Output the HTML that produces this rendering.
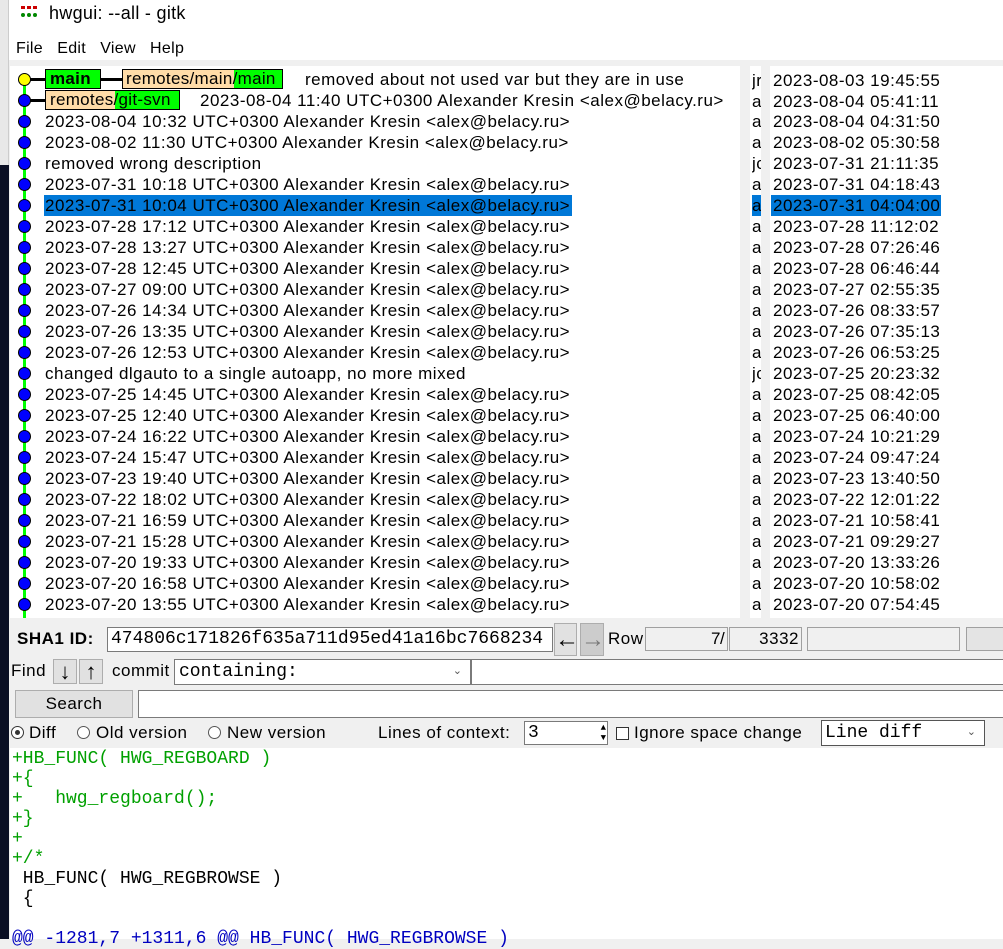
<!DOCTYPE html>
<html><head><meta charset="utf-8"><style>
*{margin:0;padding:0;box-sizing:border-box}
body{width:1003px;height:939px;overflow:hidden;background:#f0f0f0;font-family:"Liberation Sans",sans-serif;font-size:17px;letter-spacing:0.5px;color:#000;position:relative}
.a{position:absolute;white-space:nowrap}
.r{position:absolute;height:21px;line-height:21px;white-space:nowrap}
.dot{position:absolute;width:13px;height:13px;border-radius:50%;background:#0000ff;border:1px solid #000;left:18px}
.mono{font-family:"Liberation Mono",monospace;letter-spacing:0}
.field{position:absolute;background:#fff;border:1px solid #7a7a7a}
.sunk{position:absolute;background:#f0f0f0;border:1px solid #a0a0a0}
.btn{position:absolute;background:#e1e1e1;border:1px solid #adadad;text-align:center;letter-spacing:0}
.g{color:#00a000}
</style></head><body>
<div class="a" style="left:0;top:0;width:1003px;height:60px;background:#fff"></div>
<div class="a" style="left:0;top:0;width:9px;height:165px;background:#e8e8e8;border-right:1px solid #ccc"></div>
<div class="a" style="left:0;top:165px;width:9px;height:774px;background:#0a0f24"></div>
<div class="a" style="left:21px;top:6px;width:4px;height:3px;background:#c00"></div>
<div class="a" style="left:27px;top:6px;width:4px;height:3px;background:#c00"></div>
<div class="a" style="left:33px;top:6px;width:4px;height:3px;background:#c00"></div>
<div class="a" style="left:21px;top:13px;width:4px;height:4px;background:#080;border-radius:50%"></div>
<div class="a" style="left:27px;top:13px;width:4px;height:4px;background:#080;border-radius:50%"></div>
<div class="a" style="left:33px;top:13px;width:4px;height:4px;background:#080;border-radius:50%"></div>
<div class="a" style="left:49px;top:2px;font-size:18px;line-height:22px;letter-spacing:0.3px">hwgui: --all - gitk</div>
<div class="a" style="left:16px;top:39px;font-size:16px;letter-spacing:0.3px;line-height:20px">File&nbsp;&nbsp; Edit&nbsp;&nbsp; View&nbsp;&nbsp; Help</div>

<div class="a" style="left:10px;top:66px;width:730px;height:552px;background:#fff"></div>
<div class="a" style="left:750px;top:66px;width:11px;height:552px;background:#fff;overflow:hidden"></div>
<div class="a" style="left:770px;top:66px;width:233px;height:552px;background:#fff"></div>
<div class="a" style="left:23px;top:79px;width:3px;height:539px;background:#00ff00"></div>

<div id="rows"></div>

<div class="a" style="left:30px;top:78px;width:15px;height:3px;background:#000"></div>
<div class="a" style="left:101px;top:78px;width:21px;height:3px;background:#000"></div>
<div class="a" style="left:45px;top:69px;width:56px;height:20px;background:#00ff00;border:1px solid #000;font-weight:bold;line-height:18px;padding-left:4px;letter-spacing:0.3px">main</div>
<div class="a" style="left:122px;top:69px;width:161px;height:20px;background:linear-gradient(90deg,#ffdca8 0,#ffdca8 111px,#00ff00 111px);border:1px solid #000;line-height:18px;padding-left:3px;letter-spacing:0.3px">remotes/main/main</div>
<div class="a" style="left:305px;top:69px;line-height:21px">removed about not used var but they are in use</div>
<div class="a" style="left:30px;top:99px;width:15px;height:3px;background:#000"></div>
<div class="a" style="left:45px;top:90px;width:135px;height:20px;background:linear-gradient(90deg,#ffdca8 0,#ffdca8 69px,#00ff00 69px);border:1px solid #000;line-height:18px;padding-left:4px;letter-spacing:0.3px">remotes/git-svn</div>
<div class="a" style="left:200px;top:90px;line-height:21px">2023-08-04 11:40 UTC+0300 Alexander Kresin &lt;alex@belacy.ru&gt;</div>
<div class="dot" style="top:73px;background:#ffff00"></div>

<div class="a" style="left:17px;top:629px;font-weight:bold;line-height:20px">SHA1 ID:</div>
<div class="field mono" style="left:107px;top:627px;width:446px;height:25px;line-height:23px;padding-left:3px;font-size:18px;overflow:hidden">474806c171826f635a711d95ed41a16bc7668234</div>
<div class="btn" style="left:554px;top:623px;width:23px;height:33px;font-size:24px;line-height:31px;font-weight:bold">&#8592;</div>
<div class="btn" style="left:580px;top:623px;width:24px;height:33px;font-size:24px;line-height:31px;background:#cccccc;color:#777;font-weight:bold">&#8594;</div>
<div class="a" style="left:608px;top:629px;line-height:20px">Row</div>
<div class="sunk" style="left:645px;top:627px;width:83px;height:24px;text-align:right;padding-right:6px;line-height:22px">7</div>
<div class="a" style="left:720px;top:629px;line-height:20px">/</div>
<div class="sunk" style="left:729px;top:627px;width:73px;height:24px;text-align:right;padding-right:2px;line-height:22px">3332</div>
<div class="sunk" style="left:807px;top:627px;width:153px;height:24px"></div>
<div class="sunk" style="left:966px;top:627px;width:40px;height:24px;background:#e4e4e4"></div>

<div class="a" style="left:11px;top:661px;line-height:20px">Find</div>
<div class="btn" style="left:53px;top:659px;width:24px;height:25px;font-size:22px;line-height:23px;font-weight:bold">&#8595;</div>
<div class="btn" style="left:79px;top:659px;width:24px;height:25px;font-size:22px;line-height:23px;font-weight:bold">&#8593;</div>
<div class="a" style="left:112px;top:661px;line-height:20px">commit</div>
<div class="field mono" style="left:174px;top:659px;width:297px;height:26px;line-height:24px;padding-left:4px;font-size:18px">containing:<span style="position:absolute;right:8px;font-size:11px;color:#555">&#8964;</span></div>
<div class="field" style="left:471px;top:659px;width:540px;height:26px"></div>

<div class="btn" style="left:15px;top:690px;width:118px;height:28px;line-height:26px;letter-spacing:0.5px">Search</div>
<div class="field" style="left:138px;top:690px;width:870px;height:28px"></div>

<div class="a" style="left:11px;top:726px;width:13px;height:13px;border:1px solid #333;border-radius:50%;background:#fff"></div>
<div class="a" style="left:15px;top:730px;width:5px;height:5px;border-radius:50%;background:#333"></div>
<div class="a" style="left:29px;top:723px;line-height:20px">Diff</div>
<div class="a" style="left:77px;top:726px;width:13px;height:13px;border:1px solid #555;border-radius:50%;background:#fff"></div>
<div class="a" style="left:96px;top:723px;line-height:20px">Old version</div>
<div class="a" style="left:208px;top:726px;width:13px;height:13px;border:1px solid #555;border-radius:50%;background:#fff"></div>
<div class="a" style="left:227px;top:723px;line-height:20px">New version</div>
<div class="a" style="left:378px;top:723px;line-height:20px">Lines of context:</div>
<div class="field mono" style="left:524px;top:721px;width:84px;height:24px;line-height:22px;padding-left:3px;font-size:18px">3<span style="position:absolute;right:1px;top:1px;font-size:9px;line-height:10px">&#9650;<br>&#9660;</span></div>
<div class="a" style="left:616px;top:727px;width:13px;height:13px;border:1px solid #333;background:#fff"></div>
<div class="a" style="left:634px;top:723px;line-height:20px">Ignore space change</div>
<div class="field mono" style="left:821px;top:720px;width:164px;height:26px;line-height:24px;padding-left:3px;font-size:18px;border-color:#555">Line diff<span style="position:absolute;right:8px;font-size:11px;color:#555">&#8964;</span></div>

<div class="a" style="left:10px;top:748px;width:993px;height:191px;background:#fff"></div>
<div class="a mono" style="left:12px;top:749px;font-size:18px;line-height:20px;white-space:pre"><span class="g">+HB_FUNC( HWG_REGBOARD )
+{
+   hwg_regboard();
+}
+
+/*</span>
 HB_FUNC( HWG_REGBROWSE )
 {

<span style="color:#0000c0">@@ -1281,7 +1311,6 @@ HB_FUNC( HWG_REGBROWSE )</span></div>

<script>
var d=[
["2023-08-04 10:32 UTC+0300 Alexander Kresin <alex@belacy.ru>","a","2023-08-04 04:31:50"],
["2023-08-02 11:30 UTC+0300 Alexander Kresin <alex@belacy.ru>","a","2023-08-02 05:30:58"],
["removed wrong description","jc","2023-07-31 21:11:35"],
["2023-07-31 10:18 UTC+0300 Alexander Kresin <alex@belacy.ru>","a","2023-07-31 04:18:43"],
["2023-07-31 10:04 UTC+0300 Alexander Kresin <alex@belacy.ru>","a","2023-07-31 04:04:00"],
["2023-07-28 17:12 UTC+0300 Alexander Kresin <alex@belacy.ru>","a","2023-07-28 11:12:02"],
["2023-07-28 13:27 UTC+0300 Alexander Kresin <alex@belacy.ru>","a","2023-07-28 07:26:46"],
["2023-07-28 12:45 UTC+0300 Alexander Kresin <alex@belacy.ru>","a","2023-07-28 06:46:44"],
["2023-07-27 09:00 UTC+0300 Alexander Kresin <alex@belacy.ru>","a","2023-07-27 02:55:35"],
["2023-07-26 14:34 UTC+0300 Alexander Kresin <alex@belacy.ru>","a","2023-07-26 08:33:57"],
["2023-07-26 13:35 UTC+0300 Alexander Kresin <alex@belacy.ru>","a","2023-07-26 07:35:13"],
["2023-07-26 12:53 UTC+0300 Alexander Kresin <alex@belacy.ru>","a","2023-07-26 06:53:25"],
["changed dlgauto to a single autoapp, no more mixed","jc","2023-07-25 20:23:32"],
["2023-07-25 14:45 UTC+0300 Alexander Kresin <alex@belacy.ru>","a","2023-07-25 08:42:05"],
["2023-07-25 12:40 UTC+0300 Alexander Kresin <alex@belacy.ru>","a","2023-07-25 06:40:00"],
["2023-07-24 16:22 UTC+0300 Alexander Kresin <alex@belacy.ru>","a","2023-07-24 10:21:29"],
["2023-07-24 15:47 UTC+0300 Alexander Kresin <alex@belacy.ru>","a","2023-07-24 09:47:24"],
["2023-07-23 19:40 UTC+0300 Alexander Kresin <alex@belacy.ru>","a","2023-07-23 13:40:50"],
["2023-07-22 18:02 UTC+0300 Alexander Kresin <alex@belacy.ru>","a","2023-07-22 12:01:22"],
["2023-07-21 16:59 UTC+0300 Alexander Kresin <alex@belacy.ru>","a","2023-07-21 10:58:41"],
["2023-07-21 15:28 UTC+0300 Alexander Kresin <alex@belacy.ru>","a","2023-07-21 09:29:27"],
["2023-07-20 19:33 UTC+0300 Alexander Kresin <alex@belacy.ru>","a","2023-07-20 13:33:26"],
["2023-07-20 16:58 UTC+0300 Alexander Kresin <alex@belacy.ru>","a","2023-07-20 10:58:02"],
["2023-07-20 13:55 UTC+0300 Alexander Kresin <alex@belacy.ru>","a","2023-07-20 07:54:45"]];
function esc(s){return s.replace(/&/g,'&amp;').replace(/</g,'&lt;').replace(/>/g,'&gt;')}
var h='';
h+='<div class="r" style="left:752px;top:70px;width:9px;overflow:hidden">jr</div><div class="r" style="left:773px;top:70px">2023-08-03 19:45:55</div>';
h+='<div class="r" style="left:752px;top:91px;width:9px;overflow:hidden">a</div><div class="r" style="left:773px;top:91px">2023-08-04 05:41:11</div>';
h+='<div class="dot" style="top:94px"></div>';
for(var i=0;i<d.length;i++){
 var t=111+21*i, sel=(i==4), bg=sel?'background:#0078d7;':'';
 h+='<div class="dot" style="top:'+(t+4)+'px"></div>';
 h+='<div class="r" style="left:44px;top:'+t+'px;padding-left:1px;overflow:hidden;'+(sel?'width:528px;height:21px;':'')+bg+'">'+esc(d[i][0])+'</div>';
 h+='<div class="r" style="left:752px;top:'+t+'px;width:9px;overflow:hidden;'+bg+'">'+d[i][1]+'</div>';
 h+='<div class="r" style="left:771px;top:'+t+'px;padding-left:2px;'+(sel?'width:170px;':'')+bg+'">'+d[i][2]+'</div>';
}
document.getElementById('rows').innerHTML=h;
</script>
</body></html>
